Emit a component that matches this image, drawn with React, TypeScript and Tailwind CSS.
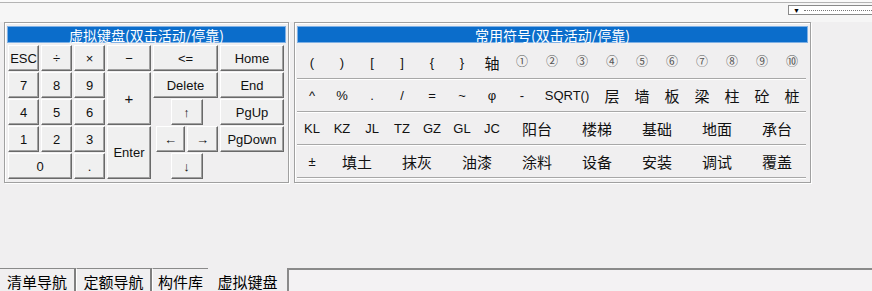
import React from "react"

const cjk = { fontFamily: '"Noto Sans CJK SC", "Noto Sans", sans-serif' }
const latin = { fontFamily: '"Liberation Sans", "Noto Sans CJK SC", sans-serif' }

// classic raised win32 button
const btn =
  "flex items-center justify-center bg-[#f0f0f0] border-t border-l border-t-white border-l-white border-b border-r border-b-[#696969] border-r-[#696969] shadow-[inset_-1px_-1px_#a0a0a0] text-[13px] text-[#111] leading-none"

function Key({ label, className = "" }: { label: string; className?: string }) {
  return (
    <div className={`${btn} ${className}`} style={latin}>
      {label}
    </div>
  )
}

function TitleBar({ text }: { text: string }) {
  return (
    <div
      className="h-[17px] bg-[#0b6dcb] border border-[#7fb0e4] flex items-center justify-center text-white text-[14px] leading-none"
      style={cjk}
    >
      {text}
    </div>
  )
}

type Sym = { t: string; span?: number; kind?: "cn" | "lat" | "num" }

const rows: Sym[][] = [
  [
    { t: "(" }, { t: ")" }, { t: "[" }, { t: "]" }, { t: "{" }, { t: "}" }, { t: "轴", kind: "cn" },
    ..."①②③④⑤⑥⑦⑧⑨⑩".split("").map((c) => ({ t: c, kind: "num" as const })),
  ],
  [
    { t: "^" }, { t: "%" }, { t: "." }, { t: "/" }, { t: "=" }, { t: "~" }, { t: "φ" }, { t: "-" },
    { t: "SQRT()", span: 2 },
    ..."层墙板梁柱砼桩".split("").map((c) => ({ t: c, kind: "cn" as const })),
  ],
  [
    { t: "KL" }, { t: "KZ" }, { t: "JL" }, { t: "TZ" }, { t: "GZ" }, { t: "GL" }, { t: "JC" },
    ...["阳台", "楼梯", "基础", "地面", "承台"].map((c) => ({ t: c, span: 2, kind: "cn" as const })),
  ],
  [
    { t: "±" },
    ...["填土", "抹灰", "油漆", "涂料", "设备", "安装", "调试", "覆盖"].map((c) => ({ t: c, span: 2, kind: "cn" as const })),
  ],
]

export default function App() {
  return (
    <div className="w-[872px] h-[291px] bg-[#f0eff0] overflow-hidden flex flex-col select-none">
      {/* top strip */}
      <div className="h-[22px] flex flex-col">
        <div className="h-[2px] bg-[#fafafa]" />
        <div className="h-[1px] bg-[#b4b4b4]" />
        <div className="flex-1 bg-[#f6f6f6] flex justify-end pt-[2px]">
          <div className="w-[84px] h-[10px] bg-white border border-[#8a8a8a] border-r-0 flex items-center gap-[4px] pl-[4px]">
            <span className="text-[7px] leading-none text-black">▼</span>
            <div className="flex-1 border-t border-dotted border-[#777]" />
          </div>
        </div>
      </div>

      {/* panels */}
      <div className="flex pl-[4px] gap-[5px] h-[161px]">
        {/* virtual keyboard */}
        <div className="w-[285px] h-[161px] border border-[#a0a0a0] shadow-[inset_1px_1px_#fff,1px_1px_#fff] pt-[3px] px-[2px]">
          <TitleBar text="虚拟键盘(双击活动/停靠)" />
          <div className="mt-[2px] ml-[1px] grid grid-cols-[31px_31px_31px_44px_65px_64px] grid-rows-[repeat(5,26px)] gap-x-[2px] gap-y-[1px]">
            <Key label="ESC" />
            <Key label="÷" />
            <Key label="×" />
            <Key label="−" />
            <Key label="<=" />
            <Key label="Home" />

            <Key label="7" />
            <Key label="8" />
            <Key label="9" />
            <Key label="+" className="row-span-2 text-[15px]" />
            <Key label="Delete" />
            <Key label="End" />

            <Key label="4" />
            <Key label="5" />
            <Key label="6" />
            <div className="flex justify-center pl-[2px]">
              <Key label="↑" className="w-[32px] text-[11px]" />
            </div>
            <Key label="PgUp" />

            <Key label="1" />
            <Key label="2" />
            <Key label="3" />
            <Key label="Enter" className="row-span-2" />
            <div className="flex justify-between pl-[3px]">
              <Key label="←" className="w-[29px] text-[11px]" />
              <Key label="→" className="w-[31px] text-[11px]" />
            </div>
            <Key label="PgDown" />

            <Key label="0" className="col-span-2" />
            <Key label="." />
            <div className="flex justify-center pl-[2px]">
              <Key label="↓" className="w-[32px] text-[11px]" />
            </div>
            <div />
          </div>
        </div>

        {/* common symbols */}
        <div className="w-[517px] h-[161px] border border-[#a0a0a0] shadow-[inset_1px_1px_#fff,1px_1px_#fff] pt-[3px] px-[2px]">
          <TitleBar text="常用符号(双击活动/停靠)" />
          <div className="mt-[3px] ml-[3px] w-[506px]">
            {rows.map((row, i) => (
              <div
                key={i}
                className="h-[33px] border-b border-[#a8a8a8] shadow-[0_1px_#fff] grid grid-cols-[repeat(17,30px)] items-center -ml-[3px]"
              >
                {row.map((s, j) => (
                  <div
                    key={j}
                    className={`text-center leading-none ${s.span === 2 ? "col-span-2" : ""} ${
                      s.kind === "cn"
                        ? "text-[15px] text-[#111]"
                        : s.kind === "num"
                        ? "text-[12px] text-[#555]"
                        : "text-[13px] text-[#111]"
                    }`}
                    style={s.kind === "cn" ? cjk : latin}
                  >
                    {s.t}
                  </div>
                ))}
              </div>
            ))}
          </div>
        </div>
      </div>

      <div className="flex-1" />

      {/* bottom tabs */}
      <div className="h-[23px] flex text-[15px] leading-none text-black" style={cjk}>
        <div className="w-[76px] border-t border-[#8a8a8a] border-r-2 border-r-[#808080] flex items-center justify-center pt-[2px]">
          清单导航
        </div>
        <div className="w-[76px] border-t border-[#8a8a8a] border-r-2 border-r-[#808080] border-l border-l-white flex items-center justify-center pt-[2px]">
          定额导航
        </div>
        <div className="w-[56px] border-t border-[#8a8a8a] border-l border-l-white flex items-center justify-center pt-[2px]">
          构件库
        </div>
        <div className="w-[79px] flex items-end justify-center pb-[2px]">
          虚拟键盘
        </div>
        <div className="flex-1 border-t-2 border-l-2 border-[#8a8a8a] bg-[#f3f2f3]" />
      </div>
    </div>
  )
}
